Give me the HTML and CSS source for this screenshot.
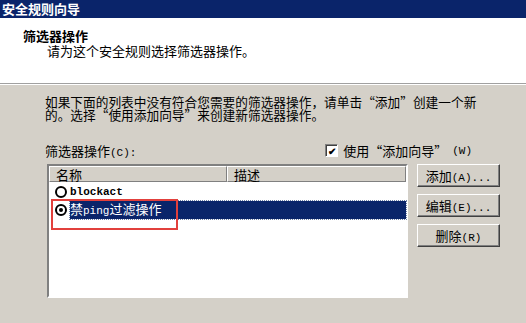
FILE: index.html
```html
<!DOCTYPE html>
<html lang="zh-CN">
<head>
  <meta charset="UTF-8">
  <title>安全规则向导</title>
  <link rel="stylesheet" href="styles.css">
</head>
<body>

  <div class="titlebar">安全规则向导</div>

  <!-- 向导页头 -->
  <div class="header">
    <div class="h-title">筛选器操作</div>
    <div class="h-sub">请为这个安全规则选择筛选器操作。</div>
  </div>

  <div class="content">
    <div class="intro">如果下面的列表中没有符合您需要的筛选器操作，请单击“添加”创建一个新<br>的。选择“使用添加向导”来创建新筛选器操作。</div>

    <div class="label-row">
      <span>筛选器操作<span class="mono">(C):</span></span>
      <span class="check-wrap"><span class="checkbox">✔</span>使用“添加向导”<span class="mono">(W)</span></span>
    </div>

    <div class="main-row">
      <div class="listbox">
        <div class="list-head">
          <div class="col-name">名称</div>
          <div class="col-desc">描述</div>
        </div>
        <div class="list-row">
          <span class="radio"></span>
          <span class="item mono">blockact</span>
        </div>
        <div class="list-row">
          <span class="radio on"></span>
          <span class="item selected">禁<span class="mono">ping</span>过滤操作</span>
        </div>
        <div class="mark"></div>
      </div>

      <div class="buttons">
        <button>添加<span class="mono">(A)...</span></button>
        <button>编辑<span class="mono">(E)...</span></button>
        <button>删除<span class="mono">(R)</span></button>
      </div>
    </div>
  </div>

</body>
</html>
```

FILE: styles.css
```css
body { margin: 0; width: 526px; height: 323px; overflow: hidden; background: #d4d0c8; font-family: "Noto Sans CJK SC", sans-serif; font-size: 13px; color: #000; }
.mono { font-family: "Liberation Mono", monospace; font-size: 11px; }

.titlebar { height: 18px; background: #0a246a; color: #fff; font-weight: bold; font-size: 13px; line-height: 17px; padding-left: 2px; }
.header { height: 65px; background: #fff; border-bottom: 1px solid #a0a0a0; box-shadow: 0 1px 0 #fff; }
.h-title { font-weight: bold; padding: 10px 0 0 23px; line-height: 15px; }
.h-sub { padding-left: 47px; line-height: 15px; }

.content { padding: 12px 0 0 45px; }
.intro { line-height: 13px; font-size: 12.7px; margin-top: -1px; }

.label-row { display: flex; width: 427px; justify-content: space-between; margin-top: 22px; line-height: 16px; }
.check-wrap { display: flex; align-items: center; gap: 5px; margin-top: -3px; }
.checkbox { width: 11px; height: 11px; background: #fff; border: 1px solid; border-color: #808080 #fff #fff #808080; box-shadow: inset 1px 1px 0 #404040; font-size: 10px; line-height: 11px; text-align: center; font-weight: bold; }

.main-row { display: flex; gap: 9px; margin-top: 3px; }
.listbox { position: relative; width: 357px; height: 130px; background: #fff; border: 2px solid; border-color: #808080 #fff #fff #808080; margin-left: 2px; }
.list-head { display: flex; height: 16px; line-height: 15px; }
.list-head div { box-sizing: border-box; background: #d4d0c8; border: 1px solid; border-color: #fff #808080 #808080 #fff; padding-left: 6px; }
.col-name { width: 178px; }
.col-desc { flex: 1; }
.list-row { display: flex; align-items: center; height: 17px; padding-left: 6px; margin-top: 1px; }
.radio { width: 8px; height: 8px; border: 2px solid #000; border-radius: 50%; background: #fff; margin-right: 3px; position: relative; }
.radio.on::after { content: ""; position: absolute; left: 2px; top: 2px; width: 4px; height: 4px; background: #000; border-radius: 50%; }
.item { line-height: 16px; font-weight: bold; }
.item.selected { flex: 1; background: #0a246a; color: #fff; font-weight: normal; outline: 1px dotted #7080a8; }
.mark { position: absolute; left: 2px; top: 33px; width: 123px; height: 27px; border: 2px solid #e2403c; }

.buttons { display: flex; flex-direction: column; gap: 7px; }
button { width: 83px; height: 23px; padding: 0; background: #d4d0c8; font-family: inherit; font-size: 13px; border: 1px solid; border-color: #fff #404040 #404040 #fff; box-shadow: inset -1px -1px 0 #808080; }
```
